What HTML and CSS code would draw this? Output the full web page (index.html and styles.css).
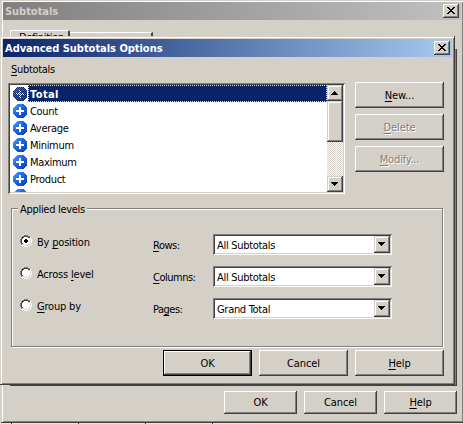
FILE: index.html
```html
<!DOCTYPE html>
<html lang="en">
<head>
    <meta charset="UTF-8">
    <meta name="viewport" content="width=device-width, initial-scale=1.0">
    <title>Advanced Subtotals Options</title>
    <link rel="stylesheet" href="styles.css">
</head>
<body>
    <svg width="0" height="0" class="defs">
        <defs>
            <linearGradient id="blue" x1="0" y1="0" x2="1" y2="1">
                <stop offset="0" stop-color="#5aa2ff"/>
                <stop offset="0.45" stop-color="#1a66e8"/>
                <stop offset="1" stop-color="#0a3fb8"/>
            </linearGradient>
            <pattern id="dots" width="2" height="2" patternUnits="userSpaceOnUse">
                <rect width="1" height="1" fill="#0a246a"/>
                <rect x="1" y="1" width="1" height="1" fill="#0a246a"/>
            </pattern>
            <symbol id="plus" viewBox="0 0 14 14">
                <path d="M4 0h6l4 4v6l-4 4H4l-4-4V4z" fill="url(#blue)"/>
                <path d="M6 3h2v3h3v2H8v3H6V8H3V6h3z" fill="#fff"/>
            </symbol>
            <symbol id="close" viewBox="0 0 8 7">
                <path d="M0 0h2v1h1v1h2v-1h1v-1h2v1h-1v1h-1v1h-1v1h1v1h1v1h1v1h-2v-1h-1v-1h-2v1h-1v1h-2v-1h1v-1h1v-1h1v-1h-1v-1h-1v-1h-1z"/>
            </symbol>
            <symbol id="down" viewBox="0 0 7 4">
                <path d="M0 0h7v1h-1v1h-1v1h-1v1h-1v-1h-1v-1h-1v-1h-1z"/>
            </symbol>
            <symbol id="up" viewBox="0 0 7 4">
                <path d="M3 0h1v1h1v1h1v1h1v1h-7v-1h1v-1h1v-1h1z"/>
            </symbol>
            <symbol id="radio" viewBox="0 0 12 12">
                <circle cx="6" cy="6" r="5" fill="#fff"/>
                <path d="M4 0h4v1H4zM2 1h2v1H2zM8 1h2v1H8zM1 2h1v2H1zM0 4h1v4H0zM1 8h1v2H1z" fill="#808080"/>
                <path d="M4 1h4v1H4zM2 2h2v1H2zM8 2h2v1H8zM2 3h1v1H2zM1 4h1v4H1zM2 8h1v1H2z" fill="#404040"/>
                <path d="M10 2h1v2h-1zM11 4h1v4h-1zM10 8h1v2h-1zM8 10h2v1H8zM4 11h4v1H4zM2 10h2v1H2z" fill="#fff"/>
                <path d="M9 3h1v1H9zM10 4h1v4h-1zM9 8h1v1H9zM8 9h2v1H8zM4 10h4v1H4zM2 9h2v1H2z" fill="#d4d0c8"/>
            </symbol>
        </defs>
    </svg>

    <div class="window parent">
        <div class="titlebar inactive">
            <span>Subtotals</span>
            <button class="close"><svg width="8" height="7"><use href="#close"/></svg></button>
        </div>
        <div class="tabs">
            <div class="tab active">Definition</div>
            <div class="tab"></div>
        </div>
        <div class="tab-page"></div>
        <div class="footer small">
            <button class="btn">OK</button>
            <button class="btn">Cancel</button>
            <button class="btn"><u>H</u>elp</button>
        </div>
    </div>
    <div class="below"><i></i><i></i><i></i><i></i></div>

    <div class="window dialog">
        <div class="titlebar">
            <span>Advanced Subtotals Options</span>
            <button class="close"><svg width="8" height="7"><use href="#close"/></svg></button>
        </div>
        <div class="content">
            <div class="list-label"><u>S</u>ubtotals</div>
            <div class="top">
                <div class="listbox">
                    <ul>
                        <li class="selected"><svg width="14" height="14"><use href="#plus"/><path d="M4 0h6l4 4v6l-4 4H4l-4-4V4z" fill="url(#dots)"/></svg><span>Total</span></li>
                        <li><svg width="14" height="14"><use href="#plus"/></svg><span>Count</span></li>
                        <li><svg width="14" height="14"><use href="#plus"/></svg><span>Average</span></li>
                        <li><svg width="14" height="14"><use href="#plus"/></svg><span>Minimum</span></li>
                        <li><svg width="14" height="14"><use href="#plus"/></svg><span>Maximum</span></li>
                        <li><svg width="14" height="14"><use href="#plus"/></svg><span>Product</span></li>
                        <li><svg width="14" height="14"><use href="#plus"/></svg><span>Index</span></li>
                    </ul>
                    <div class="scrollbar">
                        <div class="arrow"><svg width="7" height="4"><use href="#up"/></svg></div>
                        <div class="thumb"></div>
                        <div class="arrow last"><svg width="7" height="4"><use href="#down"/></svg></div>
                    </div>
                </div>
                <div class="side">
                    <button class="btn"><u>N</u>ew...</button>
                    <button class="btn off"><u>D</u>elete</button>
                    <button class="btn off"><u>M</u>odify...</button>
                </div>
            </div>
            <fieldset>
                <legend>Applied levels</legend>
                <div class="radios">
                    <label><svg width="12" height="12"><use href="#radio"/><path d="M5 4h2v1h1v2h-1v1h-2v-1h-1v-2h1z"/></svg><span>By <u>p</u>osition</span></label>
                    <label><svg width="12" height="12"><use href="#radio"/></svg><span>Across <u>l</u>evel</span></label>
                    <label><svg width="12" height="12"><use href="#radio"/></svg><span><u>G</u>roup by</span></label>
                </div>
                <div class="combos">
                    <div class="row">
                        <span><u>R</u>ows:</span>
                        <div class="combo"><span>All Subtotals</span><div class="arrow"><svg width="7" height="4"><use href="#down"/></svg></div></div>
                    </div>
                    <div class="row">
                        <span><u>C</u>olumns:</span>
                        <div class="combo"><span>All Subtotals</span><div class="arrow"><svg width="7" height="4"><use href="#down"/></svg></div></div>
                    </div>
                    <div class="row">
                        <span>Pa<u>g</u>es:</span>
                        <div class="combo"><span>Grand Total</span><div class="arrow"><svg width="7" height="4"><use href="#down"/></svg></div></div>
                    </div>
                </div>
            </fieldset>
            <div class="footer">
                <button class="btn default">OK</button>
                <button class="btn">Cancel</button>
                <button class="btn"><u>H</u>elp</button>
            </div>
        </div>
    </div>
</body>
</html>
```
FILE: styles.css
```css
* {
    box-sizing: border-box;
}
body {
    margin: 0;
    width: 463px;
    height: 424px;
    overflow: hidden;
    position: relative;
    background-color: #d4d0c8;
    font-family: "DejaVu Sans Condensed", "DejaVu Sans", sans-serif;
    font-size: 11px;
    line-height: 13px;
    letter-spacing: -0.3px;
    color: #000;
    white-space: nowrap;
}
svg {
    display: block;
    flex: none;
    shape-rendering: crispEdges;
}
.defs {
    position: absolute;
}
u {
    text-underline-offset: 2px;
    text-decoration-thickness: 1px;
    text-decoration-skip-ink: none;
}
.window {
    position: absolute;
    background-color: #d4d0c8;
    display: flex;
    flex-direction: column;
}
.parent {
    left: 1px;
    top: 0;
    width: 463px;
    height: 423px;
    padding: 2px;
    border-bottom: 1px solid #404040;
    box-shadow: inset 1px 1px #d4d0c8, inset 2px 2px #fff, inset -2px -1px #808080;
}
.dialog {
    left: 0;
    top: 36px;
    width: 455px;
    height: 349px;
    padding: 3px 2px 2px 3px;
    border-right: 1px solid #404040;
    border-bottom: 1px solid #404040;
    box-shadow: inset 1px 1px #d4d0c8, inset 2px 2px #fff, inset -1px -1px #808080;
}
.titlebar {
    height: 18px;
    flex: none;
    display: flex;
    align-items: center;
    justify-content: space-between;
    padding: 0 0 0 2px;
    color: #fff;
    font-weight: bold;
    letter-spacing: -0.03px;
    background: linear-gradient(to right, #0a246a, #a6caf0);
}
.dialog .titlebar {
    width: 449px;
    padding-right: 2px;
}
.parent .titlebar {
    width: 458px;
    padding-right: 2px;
    color: #d4d0c8;
    background: linear-gradient(to right, #808080, #c0c0c0);
}
button {
    font: inherit;
    letter-spacing: inherit;
    color: #000;
    padding: 0;
    border: 0;
    background-color: #d4d0c8;
    display: flex;
    align-items: center;
    justify-content: center;
    box-shadow: inset -1px -1px #404040, inset 1px 1px #fff, inset -2px -2px #808080;
}
.close {
    width: 16px;
    height: 14px;
    padding: 0 1px 1px 0;
}
.tabs {
    display: flex;
    align-items: flex-end;
    height: 30px;
    padding: 10px 0 0 7px;
}
.tab {
    width: 83px;
    height: 18px;
    border-top: 1px solid #fff;
    border-right: 2px solid #404040;
}
.tab.active {
    width: 60px;
    height: 20px;
    padding: 0 0 0 8px;
    border-left: 1px solid #fff;
    border-radius: 2px 2px 0 0;
}
.tab-page {
    flex: none;
    width: 447px;
    height: 337px;
    margin: -1px 0 0 7px;
    border-right: 1px solid #404040;
    border-bottom: 1px solid #404040;
    box-shadow: inset -1px -1px #808080;
}
.footer {
    display: flex;
    justify-content: flex-end;
    gap: 7px;
}
.btn {
    width: 89px;
    height: 26px;
    letter-spacing: -0.1px;
}
.btn.default {
    border: 1px solid #000;
}
.btn.off {
    color: #808080;
    text-shadow: 1px 1px #fff;
}
.small {
    padding: 5px 5px 0 0;
}
.small .btn {
    width: 73px;
    height: 23px;
}
.below {
    position: absolute;
    left: 0;
    top: 423px;
    width: 463px;
    height: 1px;
    display: flex;
    gap: 66px;
    padding-left: 11px;
    background-color: #e8e6e0;
}
.below i {
    width: 1px;
    background-color: #404040;
}
.content {
    width: 441px;
    padding: 5px 0 0 5px;
}
.list-label {
    height: 20px;
    padding: 1px 0 0 3px;
}
.top {
    display: flex;
    justify-content: space-between;
}
.listbox {
    width: 337px;
    height: 111px;
    margin-top: 1px;
    padding: 2px;
    display: flex;
    background-color: #fff;
    box-shadow: inset 1px 1px #808080, inset -1px -1px #fff, inset 2px 2px #404040, inset -2px -2px #d4d0c8;
}
ul {
    flex: 1;
    margin: 0;
    padding: 0;
    overflow: hidden;
    list-style: none;
}
li {
    height: 17px;
    display: flex;
    align-items: center;
    padding-left: 3px;
}
li svg {
    margin-right: 1px;
}
li span {
    flex: 1;
    height: 17px;
    padding: 3px 1px 0 2px;
}
.selected span {
    color: #fff;
    font-weight: bold;
    letter-spacing: 0.4px;
    padding: 2px 1px 0;
    background-color: #0a246a;
    border: 1px dotted #f5db95;
}
.scrollbar {
    width: 16px;
    display: flex;
    flex-direction: column;
    background: repeating-conic-gradient(#fff 0 25%, #d4d0c8 0 50%) 0 0 / 2px 2px;
}
.arrow, .thumb {
    width: 16px;
    height: 16px;
    background-color: #d4d0c8;
    display: flex;
    align-items: center;
    justify-content: center;
    box-shadow: inset -1px -1px #404040, inset 1px 1px #d4d0c8, inset -2px -2px #808080, inset 2px 2px #fff;
}
.arrow {
    padding: 0 1px 1px 0;
}
.thumb {
    height: 41px;
}
.last {
    margin-top: auto;
}
.side {
    display: flex;
    flex-direction: column;
    gap: 6px;
}
fieldset {
    width: 432px;
    height: 139px;
    margin: 14px 0 3px 3px;
    padding: 21px 0 0 8px;
    display: flex;
    border: 1px solid #808080;
    box-shadow: inset 1px 1px #fff, 1px 1px #fff;
    position: relative;
}
/* sits on the group box border */
legend {
    position: absolute;
    left: 6px;
    top: -6px;
    padding: 0 2px;
    background-color: #d4d0c8;
}
.radios {
    width: 133px;
    padding-top: 4px;
    display: flex;
    flex-direction: column;
    gap: 19px;
    letter-spacing: -0.2px;
}
label {
    height: 13px;
    display: flex;
    gap: 5px;
}
label svg {
    margin-top: 1px;
}
label span {
    margin-top: 2px;
}
.combos {
    padding-top: 4px;
    display: flex;
    flex-direction: column;
    gap: 11px;
}
.row {
    display: flex;
}
.row > span {
    width: 60px;
    padding-top: 5px;
    letter-spacing: -0.5px;
}
.combo {
    width: 179px;
    height: 21px;
    padding: 2px 2px 2px 4px;
    display: flex;
    justify-content: space-between;
    line-height: 19px;
    background-color: #fff;
    box-shadow: inset 1px 1px #808080, inset -1px -1px #fff, inset 2px 2px #404040, inset -2px -2px #d4d0c8;
}
.combo .arrow {
    height: 17px;
}
```
